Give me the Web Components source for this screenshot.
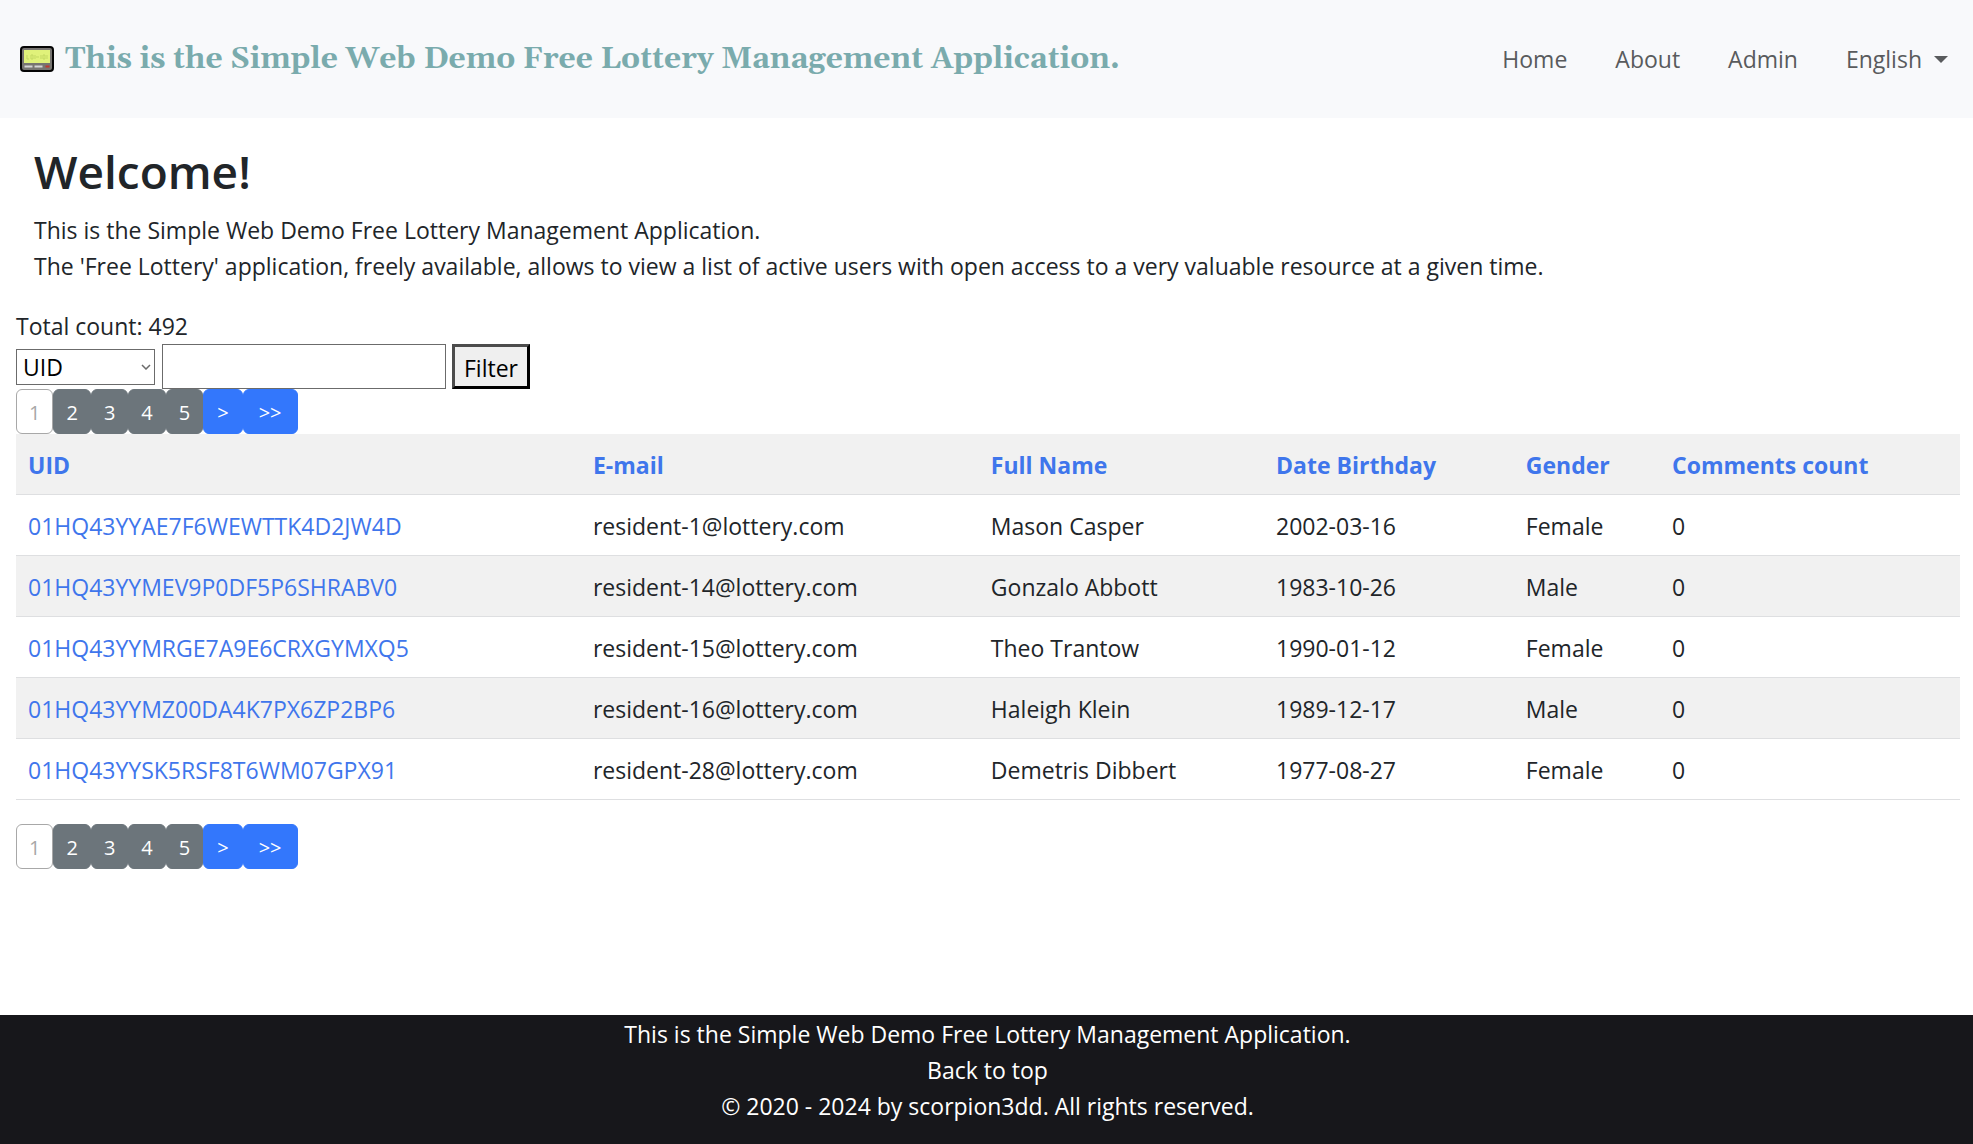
<!DOCTYPE html>
<html lang="en">
<head>
<meta charset="utf-8">
<meta name="viewport" content="width=device-width, initial-scale=1">
<title>Free Lottery Management</title>
<style>
  body { margin: 0; font: 23px/36px "Open Sans", "Noto Sans", sans-serif; color: #212529; background: #fff; }
</style>
</head>
<body>
<lottery-app></lottery-app>

<template id="lottery-app">
  <style>
    :host { display: flex; flex-direction: column; min-height: 100vh; }
    main { flex: 1; padding: 0 13px 24px 16px; }
  </style>
  <site-header>
    This is the Simple Web Demo Free Lottery Management Application.
    <nav-link slot="nav" href="#home">Home</nav-link>
    <nav-link slot="nav" href="#about">About</nav-link>
    <nav-link slot="nav" href="#admin">Admin</nav-link>
    <language-menu slot="nav">English</language-menu>
  </site-header>
  <main>
    <welcome-intro>
      <span slot="title">Welcome!</span>
      This is the Simple Web Demo Free Lottery Management Application.<br>
      The 'Free Lottery' application, freely available, allows to view a list of active users with open access to a very valuable resource at a given time.
    </welcome-intro>
    <div>Total count: 492</div>
    <filter-bar></filter-bar>
    <page-list></page-list>
    <user-table></user-table>
    <page-list></page-list>
  </main>
  <site-footer>
    <span>This is the Simple Web Demo Free Lottery Management Application.</span>
    <span slot="legal">© 2020 - 2024 by scorpion3dd. All rights reserved.</span>
  </site-footer>
</template>

<template id="site-header">
  <style>
    :host { display: block; background: #f8f9fb; }
    header { display: flex; align-items: center; justify-content: space-between; min-height: 118px; padding: 0 25px 0 20px; }
    .brand { display: flex; align-items: center; gap: 11px; color: #7aabad; text-decoration: none;
      font: bold 30px/46px Gelasio, "Liberation Serif", serif; white-space: nowrap; }
    svg { width: 34px; height: 26px; flex: none; }
    nav { display: flex; align-items: center; gap: 48px; }
  </style>
  <header>
    <a class="brand" href="#home">
      <svg viewBox="0 0 34 26" aria-hidden="true">
        <rect width="34" height="26" rx="4" fill="#050505"/>
        <rect x="2" y="2" width="30" height="22" rx="2" fill="#777571"/>
        <rect x="4" y="4" width="26" height="13" fill="#e0f27a"/>
        <path d="M7 9v4h2M11 9h2v4h-2zM15 9v4M16 11h3M21 9v4M23 9h2v4h-2zM27 9v4" fill="none" stroke="#c3d962" stroke-width="1"/>
        <path d="M4.500 19.500h8v2h-8zM14.500 19.500h8v2h-8z" fill="#d5d5d5"/>
        <path d="M25.500 19.500h4v2h-4z" fill="#c0392f"/>
      </svg>
      <span><slot></slot></span>
    </a>
    <nav><slot name="nav"></slot></nav>
  </header>
</template>

<template id="nav-link">
  <style>
    :host { display: block; }
    a { color: #595b5d; text-decoration: none; }
  </style>
  <a><slot></slot></a>
</template>

<template id="language-menu">
  <style>
    :host { display: block; }
    button { display: flex; align-items: center; gap: 12px; padding: 0; border: 0; background: none; color: #595b5d; font: inherit; }
    i { border: 7px solid transparent; border-top-color: currentColor; border-bottom: 0; }
  </style>
  <button type="button" aria-haspopup="true"><span><slot></slot></span><i></i></button>
</template>

<template id="welcome-intro">
  <style>
    :host { display: block; padding: 24px 18px; }
    h1 { margin: 0 0 11px; font-size: 46px; line-height: 59px; font-weight: 600; }
    p { margin: 0; }
  </style>
  <h1><slot name="title"></slot></h1>
  <p><slot></slot></p>
</template>

<template id="filter-bar">
  <style>
    :host { display: block; }
    form { display: flex; align-items: center; gap: 6px; }
    label { display: grid; align-items: center; margin-right: 1px; }
    select, label svg { grid-area: 1 / 1; }
    select, input, button { box-sizing: border-box; font: inherit; color: #000; border-radius: 0; margin: 0; }
    select { appearance: none; width: 139px; height: 36px; padding: 0 6px; line-height: 34px; border: 1px solid #6b6b6b; background: #fff; }
    label svg { justify-self: end; width: 10px; height: 6px; margin-right: 4px; pointer-events: none; }
    input { width: 284px; height: 45px; padding: 0 6px; border: 1px solid #6b6b6b; background: #fff; }
    button { height: 45px; padding: 2px 9px 0; line-height: 36px; background: #efefef; border: 3px solid #000; border-top-color: #4c4c4c; border-left-color: #4c4c4c; }
  </style>
  <form>
    <label>
      <select aria-label="Filter field"><option>UID</option><option>E-mail</option><option>Full Name</option></select>
      <svg viewBox="0 0 10 6" aria-hidden="true"><path d="M1 1l4 4 4-4" fill="none" stroke="#6b6b6b" stroke-width="1.500"/></svg>
    </label>
    <input type="text" aria-label="Filter value">
    <button type="button">Filter</button>
  </form>
</template>

<template id="page-list">
  <style>
    :host { display: block; }
    nav { display: flex; }
    button { box-sizing: border-box; height: 45px; padding: 2px 12px 0; border: 1px solid #6c757b; border-radius: 6px;
      background: #6c757b; color: #fff; font: inherit; font-size: 20px; line-height: 30px; }
    button:disabled { background: #fff; color: #a8a8a8; border-color: #a8a8a8; }
    .move { padding: 2px 13px 0; border-color: #3377fc; background: #3377fc; }
    .last { padding: 2px 15px 0; }
  </style>
  <nav aria-label="Pages">
    <button type="button" disabled>1</button>
    <button type="button">2</button>
    <button type="button">3</button>
    <button type="button">4</button>
    <button type="button">5</button>
    <button type="button" class="move" aria-label="Next page">&gt;</button>
    <button type="button" class="move last" aria-label="Last page">&gt;&gt;</button>
  </nav>
</template>

<template id="user-table">
  <style>
    :host { display: block; margin-bottom: 24px; }
    table { width: 100%; table-layout: fixed; border-collapse: separate; border-spacing: 0; }
    col:nth-child(1) { width: 29.060%; }
    col:nth-child(2) { width: 20.470%; }
    col:nth-child(3) { width: 14.670%; }
    col:nth-child(4) { width: 12.850%; }
    col:nth-child(5) { width: 7.520%; }
    th, td { padding: 13px 12px 11px; text-align: left; border-bottom: 1px solid #dedfe1; white-space: nowrap; }
    th, tr:nth-child(even) td { background: #f1f1f1; }
    a { color: #3f76ec; text-decoration: none; }
  </style>
  <table>
    <colgroup><col><col><col><col><col><col></colgroup>
    <thead><tr></tr></thead>
    <tbody></tbody>
  </table>
</template>

<template id="site-footer">
  <style>
    :host { display: block; background: #17171b; color: #fff; }
    footer { display: flex; flex-direction: column; align-items: center; padding: 1px 0 20px 2px; text-align: center; }
    a { color: inherit; text-decoration: none; }
  </style>
  <footer><slot></slot><a href="#top">Back to top</a><slot name="legal"></slot></footer>
</template>

<script>
  class TemplateElement extends HTMLElement {
    constructor() {
      super();
      const template = document.getElementById(this.localName);
      this.attachShadow({ mode: "open" }).append(template.content.cloneNode(true));
    }
  }

  class NavLink extends TemplateElement {
    connectedCallback() {
      this.shadowRoot.querySelector("a").href = this.getAttribute("href");
    }
  }

  const columns = ["UID", "E-mail", "Full Name", "Date Birthday", "Gender", "Comments count"];
  const users = [
    ["01HQ43YYAE7F6WEWTTK4D2JW4D", "resident-1@lottery.com", "Mason Casper", "2002-03-16", "Female", "0"],
    ["01HQ43YYMEV9P0DF5P6SHRABV0", "resident-14@lottery.com", "Gonzalo Abbott", "1983-10-26", "Male", "0"],
    ["01HQ43YYMRGE7A9E6CRXGYMXQ5", "resident-15@lottery.com", "Theo Trantow", "1990-01-12", "Female", "0"],
    ["01HQ43YYMZ00DA4K7PX6ZP2BP6", "resident-16@lottery.com", "Haleigh Klein", "1989-12-17", "Male", "0"],
    ["01HQ43YYSK5RSF8T6WM07GPX91", "resident-28@lottery.com", "Demetris Dibbert", "1977-08-27", "Female", "0"]
  ];

  class UserTable extends TemplateElement {
    connectedCallback() {
      const link = text => `<a href="#${encodeURIComponent(text)}">${text}</a>`;
      this.shadowRoot.querySelector("thead tr").innerHTML =
        columns.map(name => `<th scope="col">${link(name)}</th>`).join("");
      this.shadowRoot.querySelector("tbody").innerHTML = users.map(row =>
        `<tr>${row.map((cell, i) => `<td>${i ? cell : link(cell)}</td>`).join("")}</tr>`).join("");
    }
  }

  customElements.define("nav-link", NavLink);
  customElements.define("user-table", UserTable);
  for (const name of ["language-menu", "site-header", "welcome-intro", "filter-bar", "page-list", "site-footer", "lottery-app"]) {
    customElements.define(name, class extends TemplateElement {});
  }
</script>
</body>
</html>
